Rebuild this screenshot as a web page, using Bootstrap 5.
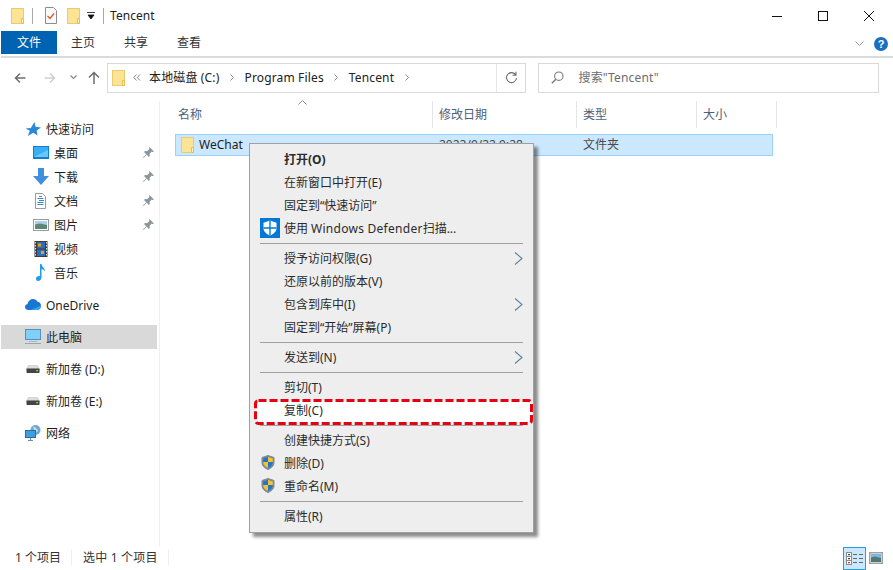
<!DOCTYPE html>
<html lang="zh-CN">
<head>
<meta charset="utf-8">
<title>Tencent</title>
<link href="https://cdn.jsdelivr.net/npm/bootstrap@5.3.0/dist/css/bootstrap.min.css" rel="stylesheet">
<style>
html,body{margin:0;height:100%;background:#fff;overflow:hidden}
body{font:12px/16px "Noto Sans","Noto Sans CJK SC",sans-serif;color:#1e1e1e}
.win{position:relative;width:893px;height:570px}
.ttl{height:31px;padding-left:11px}
.ttl-sep{width:1px;height:16px;background:#a8a8a8;flex:none}
.ttl-s1{margin-left:8px}
.ttl-doc{margin-left:11px}
.ttl-f2{margin-left:9px}
.ttl-arw{margin-left:7px}
.ttl-s2{margin-left:7px}
.ttl-name{margin-left:6px;color:#222;letter-spacing:.05px}
.gap-end{margin-left:auto}
.wbtn{width:46px;height:31px}
.wbtns{margin-right:1px}
.rib{height:27px;margin-left:1px;border-bottom:2px solid #dadbdc;padding-bottom:1px}
.rib-tab{height:23px;color:#333;margin-right:29px;padding-top:1px}
.rib-file{width:56px;background:#0063b1;color:#fff;margin-right:14px;justify-content:center}
.rib-side{padding-top:6px}
.rib-help{width:14px;height:14px;border-radius:50%;background:#1b6ec2;color:#fff;font:bold 11px/14px "Liberation Sans",sans-serif;text-align:center;margin:0 5px 0 10px}
.adr{height:39px;padding:5px 14px 4px 14px}
.adr-nav{width:93px;flex:none}
.nv-f{margin-left:18px}
.nv-d{margin-left:14px}
.nv-u{margin-left:11px}
.adr-box{width:420px;height:30px;border:1px solid #d9d9d9;padding-left:4px;color:#222}
.adr-ref{width:29px;height:28px;border-left:1px solid #e5e5e5;margin-left:auto}
.adr-find{width:341px;height:30px;border:1px solid #d9d9d9;margin-left:12px;padding-left:12px;color:#6d6d6d}
.crumb{margin-right:10.5px;letter-spacing:.15px}
.crumb-lt{margin-right:8px}
.find-t{margin-left:14px;letter-spacing:.2px}
.mn{height:450px}
.side{width:160px;margin-top:4px;padding-top:16px;border-right:1px solid #f0f0f0;flex:none}
.s-row{height:24px;width:156px;margin-left:1px;padding-left:24px;position:relative}
.s-row span{margin-left:5px;padding-top:2px}
.s-sub{padding-left:32px}
.s-gap{margin-top:8px}
.s-on{background:#d9d9d9}
.s-pin{position:absolute;left:142px;top:6px}
.lst{padding:4px 0 0 15px;flex:1;min-width:0}
.hd{height:27px;color:#4c607a}
.hd-c{height:27px;border-right:1px solid #e5e5e5;padding:2px 0 0 6px}
.c1{width:258px;padding-left:3px}.c2{width:144px}.c3{width:120px}.c4{width:80px}
.hd-sort{position:absolute;left:298px;top:100px}
.fl{height:22px;width:598px;margin-top:6px;background:#cce8ff;border:1px solid #99d1ff;color:#4a4a4a}
.fl-a{width:257px;padding-left:5px;color:#1e1e1e}
.fl-a span{margin-left:5px}
.fl-b{width:144px;padding-left:6px}
.stat{height:24px;padding-left:15px;color:#333}
.stat-sep{width:1px;height:16px;background:#f0f0f0;margin:0 11px 0 10px}
.stat-sel{letter-spacing:.2px}
.vw{width:23px;height:23px;border:1px solid #26a0da;background:#cce8ff;margin-left:auto}
.vw2{margin:0 10px 0 3px}
.ctx.dropdown-menu{left:249px;top:143px;width:285px;height:390px;padding:4px 0;margin:0;background:#eee;border:1px solid #a0a0a0;border-radius:0;box-shadow:4px 4px 3px rgba(0,0,0,.45);font-size:12px;color:#333;min-width:0}
.ctx .dropdown-item{height:23px;padding:0 10px 0 34px;display:flex;align-items:center;color:#2b2b2b;position:relative;font-size:12px;line-height:16px;background:transparent}
.ctx .dropdown-divider{margin:3px 10px;border-top:1px solid #a0a0a0;opacity:1}
.ctx-ico{position:absolute;left:10px;top:1px}
.ctx-uac{left:11px;top:3px}
.ctx-arr{margin-left:auto}
.ctx-b{font-weight:700;color:#1e1e1e}
.ctx-mark{position:absolute;left:4px;top:0;z-index:0}
.ctx-lbl{position:relative;z-index:1}
.ltn{letter-spacing:.27px;margin-left:3px}
</style>
</head>
<body>
<svg width="0" height="0" class="position-absolute">
<symbol id="fold" viewBox="0 0 13 16"><rect x=".5" y=".5" width="12" height="15" fill="#fbe493" stroke="#eccb6c"/><path d="M10.500 10.500h2v5h-2z" fill="#fdf1c0" stroke="#e5bf55"/></symbol>
<symbol id="sh" viewBox="0 0 14 15"><path d="M7 .5l6 2v5c0 3.500-3 5.700-6 7-3-1.300-6-3.500-6-7v-5z" fill="#7d8896" stroke="#7d8896"/><path d="M7 2L2.200 3.500V7H7z" fill="#1e78c8"/><path d="M7 2l4.800 1.500V7H7z" fill="#fcc02e"/><path d="M2.200 7H7v6c-2.400-1-4.800-3-4.800-6z" fill="#fcc02e"/><path d="M11.800 7H7v6c2.400-1 4.800-3 4.800-6z" fill="#1e78c8"/></symbol>
<symbol id="chev" viewBox="0 0 9 13"><path d="M1 .5l7 6-7 6" fill="none" stroke="#5d7fa3" stroke-width="1.100"/></symbol>
<symbol id="pin" viewBox="0 0 11 11"><path d="M6.500 0L11 4.500l-1.200.5-1-.4L6.500 7l.3 2-1 1-2.200-2.400-3 3.400-.6-.6 3.200-3.200L1 5l1-1 2 .3L6.400 2 6 1z" fill="#8a959c"/></symbol>
<symbol id="disk" viewBox="0 0 16 11"><path d="M3.500 2.500h9L14.500 6h-13z" fill="#dcdcdc" stroke="#c4c4c4" stroke-width=".6"/><rect x="1.500" y="5.500" width="13" height="4.500" rx=".7" fill="#444"/><rect x="11" y="7" width="2" height="1.300" fill="#4ede4e"/></symbol>
</svg>
<div class="win d-flex flex-column">
  <div class="ttl d-flex align-items-center">
    <svg width="13" height="16"><use href="#fold"/></svg>
    <div class="ttl-sep ttl-s1"></div>
    <svg class="ttl-doc" width="14" height="17" viewBox="0 0 14 17"><path d="M1.500.5h8l3 3v13h-11z" fill="#fafafa" stroke="#8d8d8d"/><path d="M3.500 9l2.500 2.500 4-5" fill="none" stroke="#e0562c" stroke-width="1.300"/></svg>
    <svg class="ttl-f2" width="13" height="16"><use href="#fold"/></svg>
    <svg class="ttl-arw" width="9" height="8" viewBox="0 0 9 8"><path d="M0 .5h8M1 3h6L4 7z" fill="#111" stroke="#111" stroke-width=".8"/></svg>
    <div class="ttl-sep ttl-s2"></div>
    <div class="ttl-name">Tencent</div>
    <div class="gap-end wbtns d-flex">
      <div class="wbtn d-flex align-items-center justify-content-center"><svg width="10" height="10"><path d="M0 5.500h10" stroke="#111"/></svg></div>
      <div class="wbtn d-flex align-items-center justify-content-center"><svg width="10" height="10"><rect x=".5" y=".5" width="9" height="9" fill="none" stroke="#111"/></svg></div>
      <div class="wbtn d-flex align-items-center justify-content-center"><svg width="10" height="10"><path d="M0 0l10 10M10 0L0 10" stroke="#111"/></svg></div>
    </div>
  </div>
  <div class="rib d-flex align-items-start">
    <div class="rib-tab rib-file d-flex align-items-center">文件</div>
    <div class="rib-tab d-flex align-items-center">主页</div>
    <div class="rib-tab d-flex align-items-center">共享</div>
    <div class="rib-tab d-flex align-items-center">查看</div>
    <div class="gap-end rib-side d-flex align-items-center">
      <svg width="9" height="6"><path d="M.5.500l4 4 4-4" fill="none" stroke="#9a9a9a"/></svg>
      <div class="rib-help">?</div>
    </div>
  </div>
  <div class="adr d-flex align-items-center">
    <div class="adr-nav d-flex align-items-center">
      <svg width="12" height="12" viewBox="0 0 12 12"><path d="M11.500 6H1.500M6 1.500L1.500 6 6 10.500" fill="none" stroke="#6e6e6e" stroke-width="1.500"/></svg>
      <svg class="nv-f" width="12" height="12" viewBox="0 0 12 12"><path d="M.5 6h10M6 1.500L10.500 6 6 10.500" fill="none" stroke="#cfcfcf" stroke-width="1.500"/></svg>
      <svg class="nv-d" width="7" height="5"><path d="M.5.500l3 3 3-3" fill="none" stroke="#8a8a8a" stroke-width="1.200"/></svg>
      <svg class="nv-u" width="12" height="13" viewBox="0 0 12 13"><path d="M6 13V1.500M1 6.500l5-5 5 5" fill="none" stroke="#6e6e6e" stroke-width="1.500"/></svg>
    </div>
    <div class="adr-box d-flex align-items-center">
      <svg width="13" height="16"><use href="#fold"/></svg>
      <svg class="ms-2 crumb-lt" width="8" height="7" viewBox="0 0 8 7"><path d="M3.500.5L.8 3.500l2.700 3M7 .5L4.300 3.500 7 6.500" fill="none" stroke="#888"/></svg>
      <div class="crumb">本地磁盘 (C:)</div>
      <svg class="crumb" width="4" height="7"><path d="M.5.500l3 3-3 3" fill="none" stroke="#888"/></svg>
      <div class="crumb">Program Files</div>
      <svg class="crumb" width="4" height="7"><path d="M.5.500l3 3-3 3" fill="none" stroke="#888"/></svg>
      <div class="crumb">Tencent</div>
      <svg width="4" height="7"><path d="M.5.500l3 3-3 3" fill="none" stroke="#888"/></svg>
      <div class="adr-ref d-flex align-items-center justify-content-center"><svg width="13" height="13" viewBox="0 0 13 13"><path d="M10.800 4A5 5 0 1 0 11.500 7M11 .8V4.300H7.500" fill="none" stroke="#6e6e6e" stroke-width="1.100"/></svg></div>
    </div>
    <div class="adr-find d-flex align-items-center">
      <svg width="13" height="13" viewBox="0 0 13 13"><circle cx="7.800" cy="5.200" r="4.200" fill="none" stroke="#7a7a7a" stroke-width="1.100"/><path d="M4.800 8.200L.8 12.200" stroke="#7a7a7a" stroke-width="1.400"/></svg>
      <span class="find-t">搜索"Tencent"</span>
    </div>
  </div>
  <div class="mn d-flex">
    <div class="side">
      <div class="s-row d-flex align-items-center"><svg width="16" height="14" viewBox="0 0 16 14"><path d="M9.500 0l1 4.800L16 5.500l-4.300 3 .8 5-4.200-2.700L2.800 14l2-5.200L.5 6.500l5.300-.6z" fill="#2b88d8"/></svg><span>快速访问</span></div>
      <div class="s-row s-sub d-flex align-items-center"><svg width="16" height="13" viewBox="0 0 16 13"><rect width="16" height="13" fill="#0f7fd6"/><path d="M1 1h14v10H1z" fill="#38aef5"/><path d="M1 11L15 4v7z" fill="#6cc7fa"/></svg><span>桌面</span><svg class="s-pin" width="11" height="11"><use href="#pin"/></svg></div>
      <div class="s-row s-sub d-flex align-items-center"><svg width="16" height="17" viewBox="0 0 16 17"><path d="M5 0h6v8h5l-8 9-8-9h5z" fill="#3f8fdc"/></svg><span>下载</span><svg class="s-pin" width="11" height="11"><use href="#pin"/></svg></div>
      <div class="s-row s-sub d-flex align-items-center"><svg width="16" height="16" viewBox="0 0 16 16"><path d="M2.500.5h7l3 3v12h-10z" fill="#fff" stroke="#9a9a9a"/><path d="M6 3.500h3M4.500 5.500h6M6 7.500h5M4.500 9.500h6M4.500 11.500h6" stroke="#3a86c8"/></svg><span>文档</span><svg class="s-pin" width="11" height="11"><use href="#pin"/></svg></div>
      <div class="s-row s-sub d-flex align-items-center"><svg width="16" height="12" viewBox="0 0 16 12"><rect x=".5" y=".5" width="15" height="11" fill="#fff" stroke="#9a9a9a"/><path d="M2 2h12v4H2z" fill="#a9cfe9"/><path d="M2 5.500l5-1 7 1.500v4H2z" fill="#5c8572"/></svg><span>图片</span><svg class="s-pin" width="11" height="11"><use href="#pin"/></svg></div>
      <div class="s-row s-sub d-flex align-items-center"><svg width="16" height="16" viewBox="0 0 16 16"><rect x="1.500" width="13" height="16" fill="#3a3a3a"/><path d="M2.500 1v14M13.500 1v14" stroke="#ddd" stroke-dasharray="1.500 1.500"/><rect x="4" y="1" width="8" height="6.500" fill="#2d6fb5"/><rect x="4" y="8.500" width="8" height="6.500" fill="#2d6fb5"/><path d="M5 2.500h3v3H5zM8 10h3v3H8z" fill="#e0a030"/></svg><span>视频</span></div>
      <div class="s-row s-sub d-flex align-items-center"><svg width="16" height="17" viewBox="0 0 16 17"><path d="M7 0h1.500c.3 3 3.500 3.500 3.500 7.500-1-1.500-2-2.300-3.500-2.600V13.500c0 2-1.700 3.500-3.500 3.500C3.900 17 3 16 3 14.700c0-1.700 2-3 4-2.500z" fill="#1d9bf0"/></svg><span>音乐</span></div>
      <div class="s-row s-gap d-flex align-items-center"><svg width="16" height="11" viewBox="0 0 16 11"><path d="M3.500 11C1.500 11 0 9.800 0 8c0-1.500 1-2.700 2.500-3C3 2 5.500 0 8 0c2 0 3.700 1 4.500 2.800 2 .1 3.500 1.800 3.500 3.900 0 2.400-1.700 4.300-4 4.300z" fill="#1976d2"/><path d="M5.500 11L16 6.500c0 2.500-1.700 4.500-4 4.500z" fill="#35a4ee"/></svg><span>OneDrive</span></div>
      <div class="s-row s-gap s-on d-flex align-items-center"><svg width="16" height="15" viewBox="0 0 16 15"><rect x=".5" y=".5" width="15" height="10" fill="#7ed0fb" stroke="#5d8fb5"/><path d="M4 12.500h8" stroke="#a8bccb"/><path d="M0 14.500h16" stroke="#8fa9bd"/></svg><span>此电脑</span></div>
      <div class="s-row s-gap d-flex align-items-center"><svg width="16" height="11"><use href="#disk"/></svg><span>新加卷 (D:)</span></div>
      <div class="s-row s-gap d-flex align-items-center"><svg width="16" height="11"><use href="#disk"/></svg><span>新加卷 (E:)</span></div>
      <div class="s-row s-gap d-flex align-items-center"><svg width="16" height="16" viewBox="0 0 16 16"><circle cx="10.500" cy="5" r="5" fill="#6fa8cf"/><path d="M8 1.500c2 .5 4 2 5 4.500l-3 2z" fill="#c4dcec"/><rect x=".5" y="5.500" width="10" height="7" fill="#3d9fe0" stroke="#2c6d9c"/><path d="M3 15.500h5M5.500 13v2" stroke="#6f8ea5"/></svg><span>网络</span></div>
    </div>
    <div class="lst">
      <div class="hd d-flex">
        <div class="hd-c c1 d-flex align-items-center">名称</div>
        <div class="hd-c c2 d-flex align-items-center">修改日期</div>
        <div class="hd-c c3 d-flex align-items-center">类型</div>
        <div class="hd-c c4 d-flex align-items-center">大小</div>
      </div>
      <div class="fl d-flex align-items-center">
        <div class="fl-a d-flex align-items-center"><svg width="13" height="16"><use href="#fold"/></svg><span>WeChat</span></div>
        <div class="fl-b">2022/9/22 9:28</div>
        <div class="fl-b">文件夹</div>
      </div>
    </div>
  </div>
  <div class="stat d-flex align-items-center">
    <div>1 个项目</div><div class="stat-sep"></div><div class="stat-sel">选中 1 个项目</div><div class="stat-sep"></div>
    <div class="vw d-flex align-items-center justify-content-center"><svg width="17" height="13" viewBox="0 0 17 13"><rect x=".5" y=".5" width="5" height="12" fill="#fff" stroke="#8c8c8c"/><path d="M.5 4.500h5M.5 8.500h5" stroke="#8c8c8c"/><path d="M2 2h2v1.300H2zM2 6h2v1.300H2z" fill="#444"/><path d="M2 10h2v1.300H2z" fill="#d03030"/><path d="M7 2.500h4M13 2.500h4M7 6.500h4M13 6.500h4M7 10.500h4M13 10.500h4" stroke="#666"/></svg></div>
    <div class="vw2"><svg class="d-block" width="14" height="12" viewBox="0 0 14 12"><rect x=".75" y=".75" width="12.500" height="10.500" fill="#fff" stroke="#a0a0a0" stroke-width="1.500"/><path d="M2 2h10v4H2z" fill="#7db6e4"/><path d="M2 5.500l4-1 6 1.500v4H2z" fill="#4d7a72"/></svg></div>
  </div>
  <svg class="hd-sort" width="9" height="5"><path d="M.5 4.500l4-4 4 4" fill="none" stroke="#8a8a8a"/></svg>
  <div class="dropdown-menu show ctx">
    <a class="dropdown-item ctx-b">打开(O)</a>
    <a class="dropdown-item">在新窗口中打开(E)</a>
    <a class="dropdown-item">固定到“快速访问”</a>
    <a class="dropdown-item"><svg class="ctx-ico" width="20" height="20" viewBox="0 0 20 20"><rect width="20" height="20" fill="#0078d7"/><path d="M10 2.500l6.500 2.200v5.500c0 3.400-3 5.800-6.500 7.300-3.500-1.500-6.500-3.900-6.500-7.300V4.700z" fill="#fff"/><path d="M9.300 2.500h1.400v15h-1.400zM3.500 9.300h13v1.400h-13z" fill="#0078d7"/></svg>使用<span class="ltn">Windows Defender</span>扫描...</a>
    <div class="dropdown-divider"></div>
    <a class="dropdown-item">授予访问权限(G)<svg class="ctx-arr" width="9" height="13"><use href="#chev"/></svg></a>
    <a class="dropdown-item">还原以前的版本(V)</a>
    <a class="dropdown-item">包含到库中(I)<svg class="ctx-arr" width="9" height="13"><use href="#chev"/></svg></a>
    <a class="dropdown-item">固定到“开始”屏幕(P)</a>
    <div class="dropdown-divider"></div>
    <a class="dropdown-item">发送到(N)<svg class="ctx-arr" width="9" height="13"><use href="#chev"/></svg></a>
    <div class="dropdown-divider"></div>
    <a class="dropdown-item">剪切(T)</a>
    <a class="dropdown-item"><svg class="ctx-mark" width="279" height="26" viewBox="0 0 279 26"><rect x="1.500" y="1.500" width="276" height="23" rx="3" fill="#fff" stroke="#e60012" stroke-width="3" stroke-dasharray="8 3"/></svg><span class="ctx-lbl">复制(C)</span></a>
    <div class="dropdown-divider"></div>
    <a class="dropdown-item">创建快捷方式(S)</a>
    <a class="dropdown-item"><svg class="ctx-ico ctx-uac" width="14" height="15"><use href="#sh"/></svg>删除(D)</a>
    <a class="dropdown-item"><svg class="ctx-ico ctx-uac" width="14" height="15"><use href="#sh"/></svg>重命名(M)</a>
    <div class="dropdown-divider"></div>
    <a class="dropdown-item">属性(R)</a>
  </div>
</div>
<script src="https://cdn.jsdelivr.net/npm/bootstrap@5.3.0/dist/js/bootstrap.bundle.min.js"></script>
</body>
</html>
